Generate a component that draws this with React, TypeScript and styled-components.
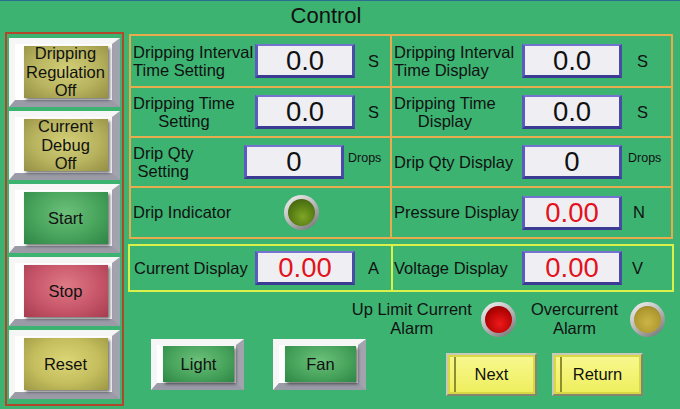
import styled, { createGlobalStyle } from "styled-components";

const GlobalStyle = createGlobalStyle`
  html, body {
    margin: 0;
    padding: 0;
    background: #3cb371;
  }
  body {
    font-family: "Liberation Sans", Arial, sans-serif;
    color: #111;
  }
`;

type Tone = "olive" | "yellow" | "green" | "red";
type LampTone = "green" | "red" | "amber";

const faceFill: Record<Tone, string> = {
  olive: "radial-gradient(ellipse at 50% 45%, #d3cf78 0%, #b8b35e 55%, #948f44 100%)",
  yellow: "radial-gradient(ellipse at 50% 45%, #dcd676 0%, #c4be5e 55%, #9d9744 100%)",
  green: "radial-gradient(ellipse at 50% 40%, #6cc07a 0%, #48a45c 55%, #2e8646 100%)",
  red: "radial-gradient(ellipse at 50% 40%, #de7a86 0%, #c8566a 55%, #a63c50 100%)",
};

const lampCore: Record<LampTone, string> = {
  green: "radial-gradient(circle at 55% 65%, #7ea624 0%, #557a14 55%, #3a560a 100%)",
  red: "radial-gradient(circle at 55% 65%, #ee1a1a 0%, #b80404 55%, #760000 100%)",
  amber: "radial-gradient(circle at 50% 60%, #cdb446 0%, #b09a30 60%, #8a7620 100%)",
};

const Screen = styled.div`
  width: 680px;
  height: 409px;
  box-sizing: border-box;
  border-top: 1px solid #2b6c93;
  background: #3cb371;
  display: grid;
  grid-template-columns: 119px 546px;
  grid-template-rows: 31px 1fr;
  column-gap: 4px;
  padding-left: 5px;
  overflow: hidden;
`;

const Title = styled.h1`
  grid-column: 1 / -1;
  margin: 0;
  padding-right: 27px;
  font-size: 22px;
  font-weight: normal;
  line-height: 29px;
  text-align: center;
`;

const SidePanel = styled.nav`
  align-self: start;
  height: 374px;
  box-sizing: border-box;
  border: 2px solid #b3472b;
  padding: 4px 2px 0;
  display: flex;
  flex-direction: column;
  gap: 4px;
`;

const Bevel = styled.div<{ $w: number; $h: number }>`
  width: ${(p) => p.$w}px;
  height: ${(p) => p.$h}px;
  box-sizing: border-box;
  flex: none;
  background: #fff;
  border-style: solid;
  border-width: 6px 8px 7px 6px;
  border-color: #f6f6f6 #a3a3af #9b9ba8 #f6f6f6;
  padding-left: 4px;
  display: flex;
  align-items: center;
  justify-content: center;
`;

const Face = styled.button<{ $tone: Tone; $w: number; $h: number }>`
  width: ${(p) => p.$w}px;
  height: ${(p) => p.$h}px;
  flex: none;
  border: none;
  padding: 0;
  background: ${(p) => faceFill[p.$tone]};
  box-shadow: 2px 2px 3px rgba(0, 0, 0, 0.55);
  font-family: inherit;
  font-size: 16.5px;
  line-height: 18.5px;
  color: #111;
  text-align: center;
  display: flex;
  align-items: center;
  justify-content: center;
  white-space: nowrap;
`;

const Main = styled.main`
  display: flex;
  flex-direction: column;
`;

const SettingsGrid = styled.div`
  margin: 2px 1px 0;
  display: grid;
  grid-template-columns: 259px 279px;
  grid-template-rows: 50px 48px 48px 49px;
  gap: 2px;
  padding: 2px;
  background: #e8ab4e;
`;

const ReadoutStrip = styled.div`
  margin-top: 5px;
  display: grid;
  grid-template-columns: 261px 279px;
  grid-template-rows: 44px;
  gap: 2px;
  padding: 2px;
  background: #dcf04c;
`;

const Cell = styled.div<{ $pad?: number }>`
  background: #3cb371;
  display: flex;
  align-items: center;
  padding-left: ${(p) => p.$pad ?? 2}px;
`;

const Label = styled.div<{ $w: number }>`
  width: ${(p) => p.$w}px;
  flex: none;
  font-size: 16.5px;
  line-height: 18.5px;
  white-space: nowrap;
`;

const LabelText = styled.span<{ $center?: boolean }>`
  display: inline-block;
  text-align: ${(p) => (p.$center ? "center" : "left")};
`;

const ValueBox = styled.div<{ $alarm?: boolean }>`
  width: 100px;
  height: 34px;
  box-sizing: border-box;
  flex: none;
  border-style: solid;
  border-width: 2px 3px 3px 3px;
  border-color: #7474d0 #4a4aa8 #3b3b94 #5a5abf;
  background: #efeff3;
  font-size: 27.5px;
  line-height: 30px;
  text-align: center;
  color: ${(p) => (p.$alarm ? "#e3121c" : "#111")};
`;

const Unit = styled.span<{ $gap: number; $small?: boolean }>`
  margin-left: ${(p) => p.$gap}px;
  font-size: ${(p) => (p.$small ? 12.5 : 16.5)}px;
  margin-bottom: ${(p) => (p.$small ? 8 : 0)}px;
`;

const Lamp = styled.span<{ $tone: LampTone; $gap?: number }>`
  width: 35px;
  height: 35px;
  flex: none;
  box-sizing: border-box;
  margin-left: ${(p) => p.$gap ?? 0}px;
  border-radius: 50%;
  padding: 4px;
  background: linear-gradient(145deg, #f6f6f6 0%, #b8b8b8 50%, #6c6c6c 100%);
  display: flex;

  &::after {
    content: "";
    flex: 1;
    border-radius: 50%;
    background: ${(p) => lampCore[p.$tone]};
  }
`;

const AlarmRow = styled.div`
  margin-top: 8px;
  height: 38px;
  display: flex;
  justify-content: flex-end;
  align-items: center;
  padding-right: 9px;
`;

const AlarmText = styled.span<{ $gap?: number }>`
  margin-left: ${(p) => p.$gap ?? 0}px;
  font-size: 16.5px;
  line-height: 19px;
  text-align: center;
  white-space: nowrap;
`;

const ControlRow = styled.div`
  margin-top: 1px;
  padding-left: 23px;
  display: flex;
  align-items: flex-start;
`;

const ButtonGroup = styled.div<{ $gap: number; $left?: number; $top?: number }>`
  display: flex;
  gap: ${(p) => p.$gap}px;
  margin-left: ${(p) => p.$left ?? 0}px;
  margin-top: ${(p) => p.$top ?? 0}px;
`;

const NavButton = styled.button`
  width: 91px;
  height: 43px;
  box-sizing: border-box;
  padding: 0;
  border-style: solid;
  border-width: 2px;
  border-color: #c9c9b8 #86866f #86866f #c9c9b8;
  background:
    linear-gradient(to right, transparent 6px, #8e8e2c 6px, #8e8e2c 8px, transparent 8px),
    linear-gradient(#f8f890, #eeee5c);
  box-shadow: inset 0 0 0 2px #d8d844;
  font-family: inherit;
  font-size: 16.5px;
  color: #111;
`;

const sideButtons: { tone: Tone; text: string[] }[] = [
  { tone: "olive", text: ["Dripping", "Regulation", "Off"] },
  { tone: "olive", text: ["Current", "Debug", "Off"] },
  { tone: "green", text: ["Start"] },
  { tone: "red", text: ["Stop"] },
  { tone: "yellow", text: ["Reset"] },
];

const Lines = ({ text }: { text: string[] }) => (
  <span>
    {text.map((t, i) => (
      <span key={i}>
        {i > 0 && <br />}
        {t}
      </span>
    ))}
  </span>
);

export default function App() {
  return (
    <>
      <GlobalStyle />
      <Screen>
        <Title>Control</Title>

        <SidePanel>
          {sideButtons.map((b) => (
            <Bevel key={b.text.join(" ")} $w={111} $h={69}>
              <Face $tone={b.tone} $w={84} $h={52}>
                <Lines text={b.text} />
              </Face>
            </Bevel>
          ))}
        </SidePanel>

        <Main>
          <SettingsGrid>
            <Cell>
              <Label $w={122}>
                <LabelText>
                  Dripping Interval
                  <br />
                  Time Setting
                </LabelText>
              </Label>
              <ValueBox>0.0</ValueBox>
              <Unit $gap={13}>S</Unit>
            </Cell>
            <Cell>
              <Label $w={128}>
                <LabelText>
                  Dripping Interval
                  <br />
                  Time Display
                </LabelText>
              </Label>
              <ValueBox>0.0</ValueBox>
              <Unit $gap={15}>S</Unit>
            </Cell>

            <Cell>
              <Label $w={122}>
                <LabelText $center>
                  Dripping Time
                  <br />
                  Setting
                </LabelText>
              </Label>
              <ValueBox>0.0</ValueBox>
              <Unit $gap={13}>S</Unit>
            </Cell>
            <Cell>
              <Label $w={128}>
                <LabelText $center>
                  Dripping Time
                  <br />
                  Display
                </LabelText>
              </Label>
              <ValueBox>0.0</ValueBox>
              <Unit $gap={15}>S</Unit>
            </Cell>

            <Cell>
              <Label $w={111}>
                <LabelText $center>
                  Drip Qty
                  <br />
                  Setting
                </LabelText>
              </Label>
              <ValueBox>0</ValueBox>
              <Unit $gap={4} $small>
                Drops
              </Unit>
            </Cell>
            <Cell>
              <Label $w={128}>
                <LabelText>Drip Qty Display</LabelText>
              </Label>
              <ValueBox>0</ValueBox>
              <Unit $gap={6} $small>
                Drops
              </Unit>
            </Cell>

            <Cell>
              <Label $w={151}>
                <LabelText>Drip Indicator</LabelText>
              </Label>
              <Lamp $tone="green" />
            </Cell>
            <Cell>
              <Label $w={128}>
                <LabelText>Pressure Display</LabelText>
              </Label>
              <ValueBox $alarm>0.00</ValueBox>
              <Unit $gap={11}>N</Unit>
            </Cell>
          </SettingsGrid>

          <ReadoutStrip>
            <Cell $pad={4}>
              <Label $w={121}>
                <LabelText>Current Display</LabelText>
              </Label>
              <ValueBox $alarm>0.00</ValueBox>
              <Unit $gap={13}>A</Unit>
            </Cell>
            <Cell $pad={1}>
              <Label $w={128}>
                <LabelText>Voltage Display</LabelText>
              </Label>
              <ValueBox $alarm>0.00</ValueBox>
              <Unit $gap={10}>V</Unit>
            </Cell>
          </ReadoutStrip>

          <AlarmRow>
            <AlarmText>
              Up Limit Current
              <br />
              Alarm
            </AlarmText>
            <Lamp $tone="red" $gap={9} />
            <AlarmText $gap={15}>
              Overcurrent
              <br />
              Alarm
            </AlarmText>
            <Lamp $tone="amber" $gap={12} />
          </AlarmRow>

          <ControlRow>
            <ButtonGroup $gap={29}>
              <Bevel $w={93} $h={51}>
                <Face $tone="green" $w={71} $h={36}>
                  Light
                </Face>
              </Bevel>
              <Bevel $w={93} $h={51}>
                <Face $tone="green" $w={71} $h={36}>
                  Fan
                </Face>
              </Bevel>
            </ButtonGroup>
            <ButtonGroup $gap={15} $left={80} $top={14}>
              <NavButton>Next</NavButton>
              <NavButton>Return</NavButton>
            </ButtonGroup>
          </ControlRow>
        </Main>
      </Screen>
    </>
  );
}
